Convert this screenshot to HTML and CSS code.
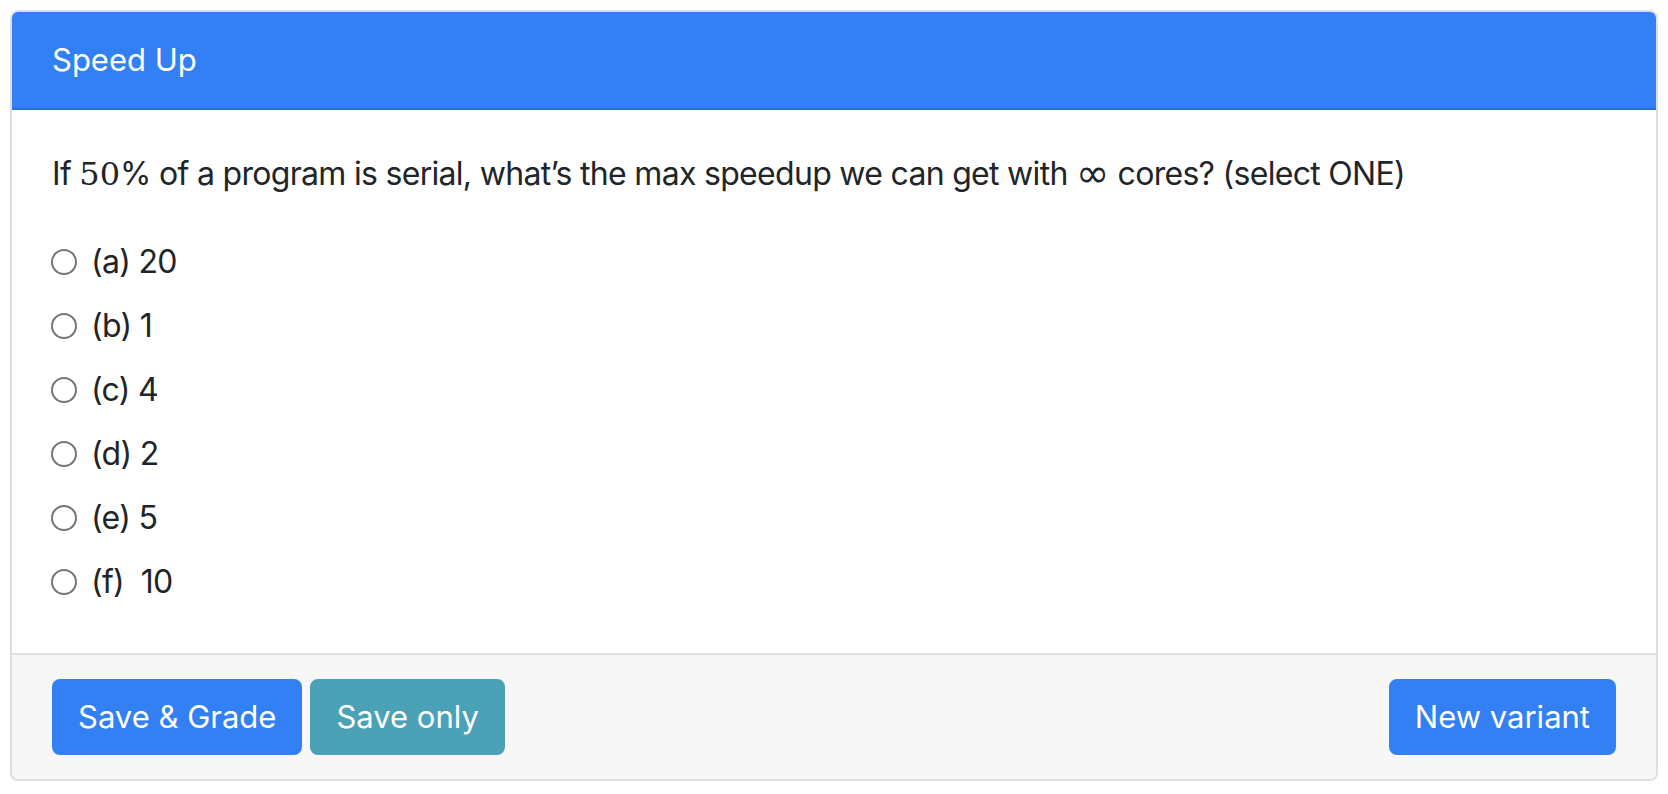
FILE: index.html
```html
<!DOCTYPE html>
<html lang="en">
<head>
<meta charset="utf-8">
<title>Speed Up</title>
<link rel="stylesheet" href="styles.css">
</head>
<body>
<div class="card">
  <div class="card-header">Speed Up</div>
  <div class="card-body">
    <p class="question">If <span class="math">50</span>% of a program is serial, what’s the max speedup we can get with <span class="inf">∞</span> cores? (select ONE)</p>
    <div class="options">
      <label class="option"><span class="radio"></span><span class="label">(a) 20</span></label>
      <label class="option"><span class="radio"></span><span class="label">(b) 1</span></label>
      <label class="option"><span class="radio"></span><span class="label">(c) 4</span></label>
      <label class="option"><span class="radio"></span><span class="label">(d) 2</span></label>
      <label class="option"><span class="radio"></span><span class="label">(e) 5</span></label>
      <label class="option"><span class="radio"></span><span class="label">(f)&nbsp; 10</span></label>
    </div>
  </div>
  <div class="card-footer">
    <div class="btn-group">
      <button class="btn btn-primary">Save &amp; Grade</button>
      <button class="btn btn-info">Save only</button>
    </div>
    <button class="btn btn-primary">New variant</button>
  </div>
</div>
</body>
</html>
```
FILE: styles.css
```css
html, body {
  margin: 0;
  padding: 0;
  background: #ffffff;
}

body {
  font-family: Inter, "Helvetica Neue", "Liberation Sans", Arial, sans-serif;
  font-size: 32px;
  line-height: 48px;
  color: #212529;
}

.card {
  margin: 10px;
  border: 2px solid #dfdfdf;
  border-radius: 8px;
  overflow: hidden;
  background: #ffffff;
}

.card-header {
  background: #3280f4;
  color: #ffffff;
  padding: 24px 40px;
  border-bottom: 2px solid #2b6fd6;
  font-size: 31px;
}

.card-body {
  padding: 40px 40px 39px 40px;
  letter-spacing: -0.7px;
}

.question {
  margin: 0 0 32px 0;
}

.math {
  font-family: "DejaVu Serif", "Liberation Serif", serif;
  font-size: 32px;
  letter-spacing: 0;
}

.inf {
  font-family: "DejaVu Sans", sans-serif;
  font-size: 40px;
  line-height: 0;
  letter-spacing: 0;
  vertical-align: -2px;
}

.options {
  display: flex;
  flex-direction: column;
}

.option {
  display: flex;
  align-items: center;
  padding: 8px 0;
  height: 48px;
}

.radio {
  width: 22px;
  height: 22px;
  border: 2px solid #767676;
  border-radius: 50%;
  margin-left: -1px;
  margin-right: 14px;
  flex: none;
}

.card-footer {
  display: flex;
  justify-content: space-between;
  align-items: center;
  background: #f7f7f7;
  border-top: 2px solid #dfdfdf;
  padding: 24px 40px;
}

.btn-group {
  display: flex;
  gap: 8px;
}

.btn {
  font-family: Inter, "Helvetica Neue", "Liberation Sans", Arial, sans-serif;
  font-size: 31px;
  line-height: 48px;
  padding: 12px 24px;
  border: 2px solid transparent;
  border-radius: 8px;
  color: #ffffff;
  cursor: pointer;
}

.btn-primary {
  background: #3280f4;
  border-color: #3280f4;
}

.btn-info {
  background: #4ba1b6;
  border-color: #4ba1b6;
}
```
